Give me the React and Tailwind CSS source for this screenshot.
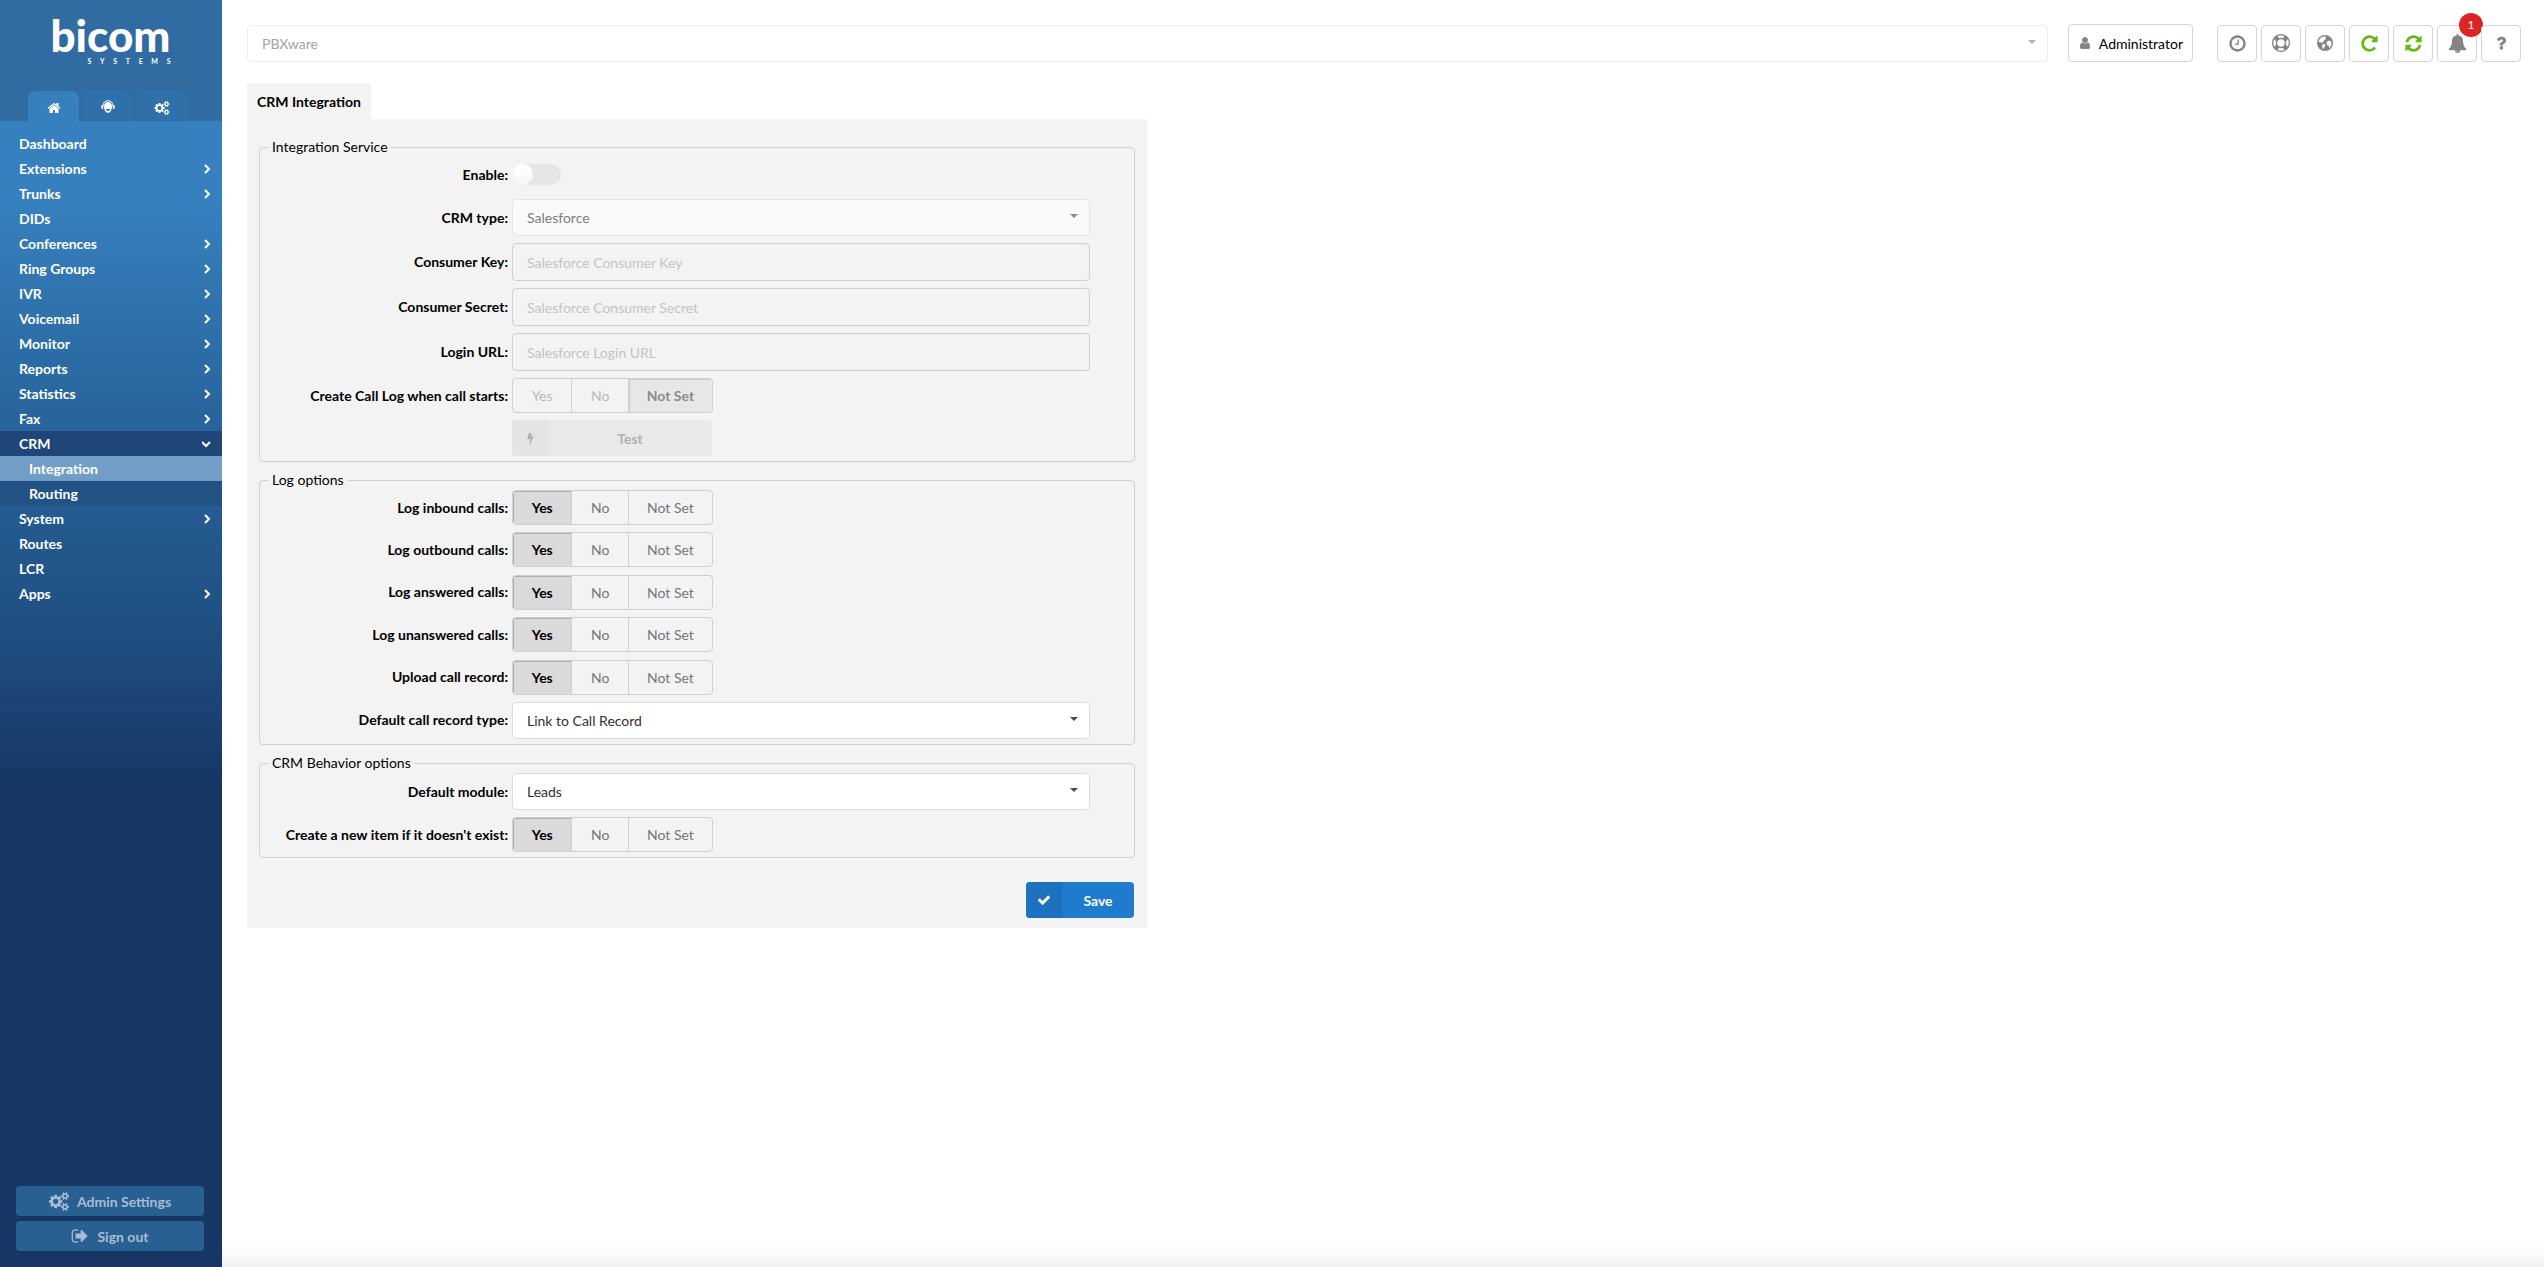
import { useState } from 'react';

/* ---------- icons ---------- */

const ICONS = {
  home: 'M1472 992v480q0 26-19 45t-45 19h-384v-384h-256v384h-384q-26 0-45-19t-19-45v-480q0-1 .5-3t.5-3l575-474 575 474q1 2 1 6zm223-69l-62 74q-8 9-21 11h-3q-13 0-21-7l-692-577-692 577q-12 8-24 7-13-2-21-11l-62-74q-8-10-7-23.5t11-21.5l719-599q32-26 76-26t76 26l244 204v-195q0-14 9-23t23-9h192q14 0 23 9t9 23v408l219 182q10 8 11 21.5t-7 23.5z',
  check: 'M1671 566q0 40-28 68l-724 724-136 136q-28 28-68 28t-68-28l-136-136-362-362q-28-28-28-68t28-68l136-136q28-28 68-28t68 28l294 295 656-657q28-28 68-28t68 28l136 136q28 28 28 68z',
  repeat: 'M1664 256v448q0 26-19 45t-45 19h-448q-42 0-59-40-17-39 14-69l138-138q-148-137-349-137-104 0-198.5 40.5t-163.5 109.5-109.5 163.5-40.5 198.5 40.5 198.5 109.5 163.5 163.5 109.5 198.5 40.5q119 0 225-52t179-147q7-10 23-12 15 0 25 9l137 138q9 8 9.5 20.5t-7.5 22.5q-109 132-264 204.5t-327 72.5q-156 0-298-61t-245-164-164-245-61-298 61-298 164-245 245-164 298-61q147 0 284.5 55.5t244.5 156.5l130-129q29-31 70-14 39 17 39 59z',
  refresh: 'M1639 1056q0 5-1 7-64 268-268 434.5t-478 166.5q-146 0-282.5-55t-243.5-157l-129 129q-19 19-45 19t-45-19-19-45v-448q0-26 19-45t45-19h448q26 0 45 19t19 45-19 45l-137 137q71 66 161 102t187 36q134 0 250-65t186-179q11-17 53-117 8-23 30-23h192q13 0 22.5 9.5t9.5 22.5zm25-800v448q0 26-19 45t-45 19h-448q-26 0-45-19t-19-45 19-45l138-138q-148-137-349-137-134 0-250 65t-186 179q-11 17-53 117-8 23-30 23h-199q-13 0-22.5-9.5t-9.5-22.5v-7q65-268 270-434.5t480-166.5q146 0 284 55.5t245 156.5l130-129q19-19 45-19t45 19 19 45z',
  clock: 'M1024 544v448q0 14-9 23t-23 9h-320q-14 0-23-9t-9-23v-64q0-14 9-23t23-9h224v-352q0-14 9-23t23-9h64q14 0 23 9t9 23zm416 352q0-148-73-273t-198-198-273-73-273 73-198 198-73 273 73 273 198 198 273 73 273-73 198-198 73-273zm224 0q0 209-103 385.5t-279.5 279.5-385.5 103-385.5-103-279.5-279.5-103-385.5 103-385.5 279.5-279.5 385.5-103 385.5 103 279.5 279.5 103 385.5z',
  question: 'M1088 1256v240q0 16-12 28t-28 12h-240q-16 0-28-12t-12-28v-240q0-16 12-28t28-12h240q16 0 28 12t12 28zm316-600q0 54-15.5 101t-35 76.5-55 59.5-57.5 43.5-61 35.5q-41 23-68.5 65t-27.5 67q0 17-12 32.5t-28 15.5h-240q-15 0-25.5-18.5t-10.5-37.5v-45q0-83 65-156.5t143-108.5q59-27 84-56t25-76q0-42-46.5-74t-107.5-32q-65 0-108 29-35 25-107 115-13 16-31 16-12 0-25-8l-164-125q-13-10-15.5-25t5.5-28q160-266 464-266 80 0 161 31t146 83 106 127.5 41 158.5z',
  ring: 'M896 0q182 0 348 71t286 191 191 286 71 348-71 348-191 286-286 191-348 71-348-71-286-191-191-286-71-348 71-348 191-286 286-191 348-71zm0 128q-190 0-361 90l194 194q82-28 167-28t167 28l194-194q-171-90-361-90zm-678 1129l194-194q-28-82-28-167t28-167l-194-194q-90 171-90 361t90 361zm678 407q190 0 361-90l-194-194q-82 28-167 28t-167-28l-194 194q171 90 361 90zm0-384q159 0 271.5-112.5t112.5-271.5-112.5-271.5-271.5-112.5-271.5 112.5-112.5 271.5 112.5 271.5 271.5 112.5zm484-217l194 194q90-171 90-361t-90-361l-194 194q28 82 28 167t-28 167z',
  bell: 'M912 1696q0-16-16-16-59 0-101.5-42.5t-42.5-101.5q0-16-16-16t-16 16q0 73 51.5 124.5t124.5 51.5q16 0 16-16zm816-288q0 52-38 90t-90 38h-448q0 106-75 181t-181 75-181-75-75-181h-448q-52 0-90-38t-38-90q50-42 91-88t85-119.5 74.5-158.5 50-206 19.5-260q0-152 117-282.5t307-158.5q-8-19-8-39 0-40 28-68t68-28 68 28 28 68q0 20-8 39 190 28 307 158.5t117 282.5q0 139 19.5 260t50 206 74.5 158.5 85 119.5 91 88z',
  signOut: 'M704 1440q0 4 1 20t.5 26.5-3 23.5-10 19.5-20.5 6.5h-320q-119 0-203.5-84.5t-84.5-203.5v-704q0-119 84.5-203.5t203.5-84.5h320q13 0 22.5 9.5t9.5 22.5q0 4 1 20t.5 26.5-3 23.5-10 19.5-20.5 6.5h-320q-66 0-113 47t-47 113v704q0 66 47 113t113 47h312l11.5 1 11.5 3 8 5.5 7 9 2 13.5zm928-544q0 26-19 45l-544 544q-19 19-45 19t-45-19-19-45v-288h-448q-26 0-45-19t-19-45v-384q0-26 19-45t45-19h448v-288q0-26 19-45t45-19 45 19l544 544q19 19 19 45z',
  bolt: 'M1333 566q18 20 7 44l-540 1157q-13 25-42 25-4 0-14-2-17-5-25.5-19t-4.5-30l197-808-406 101q-4 1-12 1-18 0-31-11-18-15-13-39l201-825q4-14 16-23t28-9h328q19 0 32 12.5t13 29.5q0 8-5 18l-171 463 396-98q8-2 12-2 19 0 34 15z',
  user: 'M1536 1399q0 109-62.5 187t-150.5 78h-854q-88 0-150.5-78t-62.5-187q0-85 8.5-160.5t31.5-152 58.5-131 94-89 134.5-34.5q131 128 313 128t313-128q76 0 134.5 34.5t94 89 58.5 131 31.5 152 8.5 160.5zm-256-887q0 159-112.5 271.5t-271.5 112.5-271.5-112.5-112.5-271.5 112.5-271.5 271.5-112.5 271.5 112.5 112.5 271.5z',
};

const COGS =
  'M832 896q0-106-75-181t-181-75-181 75-75 181 75 181 181 75 181-75 75-181zm768 512q0-52-38-90t-90-38-90 38-38 90q0 53 37.5 90.5t90.5 37.5 90.5-37.5 37.5-90.5zm0-1024q0-52-38-90t-90-38-90 38-38 90q0 53 37.5 90.5t90.5 37.5 90.5-37.5 37.5-90.5zm-384 421v185q0 10-7 19.5t-16 10.5l-155 24q-11 35-32 76 34 48 90 115 7 11 7 20 0 12-7 19-23 30-82.5 89.5t-78.5 59.5q-11 0-21-7l-115-90q-37 19-77 31-11 108-23 155-7 24-30 24h-186q-11 0-20-7.5t-10-17.5l-23-153q-34-10-75-31l-118 89q-7 7-20 7-11 0-21-8-144-133-144-160 0-9 7-19 10-14 41-53t47-61q-23-44-35-82l-152-24q-10-1-17-9.5t-7-19.5v-185q0-10 7-19.5t16-10.5l155-24q11-35 32-76-34-48-90-115-7-11-7-20 0-12 7-20 22-30 82-89t79-59q11 0 21 7l115 90q34-18 77-32 11-108 23-154 7-24 30-24h186q11 0 20 7.5t10 17.5l23 153q34 10 75 31l118-89q8-7 20-7 11 0 21 8 144 133 144 160 0 8-7 19-12 16-42 54t-45 60q23 48 34 82l152 23q10 2 17 10.5t7 19.5zm640 533v140q0 16-149 31-12 27-30 52 51 113 51 138 0 4-4 7-122 71-124 71-8 0-46-47t-52-68q-20 2-30 2t-30-2q-14 21-52 68t-46 47q-2 0-124-71-4-3-4-7 0-25 51-138-18-25-30-52-149-15-149-31v-140q0-16 149-31 13-29 30-52-51-113-51-138 0-4 4-7 4-2 35-20t59-34 30-16q8 0 46 46.5t52 67.5q20-2 30-2t30 2q51-71 92-112l6-2q4 0 124 70 4 3 4 7 0 25-51 138 17 23 30 52 149 15 149 31zm0-1024v140q0 16-149 31-12 27-30 52 51 113 51 138 0 4-4 7-122 71-124 71-8 0-46-47t-52-68q-20 2-30 2t-30-2q-14 21-52 68t-46 47q-2 0-124-71-4-3-4-7 0-25 51-138-18-25-30-52-149-15-149-31v-140q0-16 149-31 13-29 30-52-51-113-51-138 0-4 4-7 4-2 35-20t59-34 30-16q8 0 46 46.5t52 67.5q20-2 30-2t30 2q51-71 92-112l6-2q4 0 124 70 4 3 4 7 0 25-51 138 17 23 30 52 149 15 149 31z';

function Icon({ name, className }) {
  return (
    <svg viewBox="0 0 1792 1792" fill="currentColor" aria-hidden="true" className={className}>
      <path d={ICONS[name]} />
    </svg>
  );
}

function CogsIcon({ className }) {
  return (
    <svg viewBox="-64 0 1920 1792" fill="currentColor" aria-hidden="true" className={className}>
      <path d={COGS} />
    </svg>
  );
}

function HeadsetIcon({ className }) {
  return (
    <svg viewBox="0 0 14 14" fill="currentColor" aria-hidden="true" className={className}>
      <path d="M2 6C2 2.6 4.2.7 7 .7S12 2.6 12 6" fill="none" stroke="currentColor" strokeWidth="1" />
      <rect x="0.3" y="5" width="2" height="4" rx="1" />
      <rect x="11.7" y="5" width="2" height="4" rx="1" />
      <path
        fillRule="evenodd"
        d="M7 2C9.600 2 11 3.700 11 6.200c0 3.600-1.800 6.600-4 6.600s-4-3-4-6.600C3 3.700 4.400 2 7 2zM4.900 9c.3 1.300 1.200 1.900 2.300 1.900 1.200 0 1.900-.7 2.200-1.900z"
      />
    </svg>
  );
}

function GlobeIcon({ className }) {
  return (
    <svg viewBox="0 0 16 16" aria-hidden="true" className={className}>
      <circle cx="8" cy="8" r="8" fill="currentColor" />
      <path
        fill="#fff"
        d="M8.200 1.300L9 2.200 7.800 2.900 8.700 3.700 8.900 4.500 7.600 4.800 6.900 5.900 5.800 6.900 4.900 7 5.700 8.100 5.300 8.500 3.700 7.300 2.500 6.700 1.400 7.300C1.600 5.200 2.800 3.300 4.600 2.200zM10.200 6.500L11.900 5.600 13.400 6.100 14.600 7.700C14.600 9.800 13.600 11.700 12.100 12.900L11.600 10.600 10.300 10.200 9.300 8.400zM5.900 8.800L7.400 9.300 8.500 10.400 8 11.700 6.900 12.500 6.200 14.400C5.500 13.300 5 12 5.200 10.700z"
      />
    </svg>
  );
}

function Chevron({ open }) {
  return (
    <svg
      viewBox="0 0 10 10"
      fill="none"
      stroke="currentColor"
      strokeWidth="2"
      aria-hidden="true"
      className="size-[10px]"
    >
      <path d={open ? 'M0 3l4 4 4-4' : 'M3 1l4 4-4 4'} />
    </svg>
  );
}

/* ---------- sidebar ---------- */

const MENU = [
  { label: 'Dashboard' },
  { label: 'Extensions', more: true },
  { label: 'Trunks', more: true },
  { label: 'DIDs' },
  { label: 'Conferences', more: true },
  { label: 'Ring Groups', more: true },
  { label: 'IVR', more: true },
  { label: 'Voicemail', more: true },
  { label: 'Monitor', more: true },
  { label: 'Reports', more: true },
  { label: 'Statistics', more: true },
  { label: 'Fax', more: true },
  { label: 'CRM', more: true, children: ['Integration', 'Routing'] },
  { label: 'System', more: true },
  { label: 'Routes' },
  { label: 'LCR' },
  { label: 'Apps', more: true },
];

function Logo() {
  return (
    <div className="flex w-[119px] flex-col items-end text-white">
      <span className="text-[44px] leading-[44px] font-black">bicom</span>
      <span className="flex w-[83px] justify-between text-[7px] leading-2">
        {'SYSTEMS'.split('').map((c, i) => (
          <span key={i}>{c}</span>
        ))}
      </span>
    </div>
  );
}

function Sidebar() {
  return (
    <aside className="flex w-[222px] shrink-0 flex-col bg-[#163764] text-[14px] font-bold text-white">
      <header className="bg-[#306ca1]">
        <div className="flex h-[91px] items-start justify-center pt-[13px]">
          <Logo />
        </div>
        <div className="flex gap-[3px] pl-7">
          <button aria-label="Home" className="flex h-[30px] w-[51px] items-center justify-center rounded-t-lg bg-[#3680be] pt-1">
            <Icon name="home" className="size-[14px]" />
          </button>
          <button aria-label="Operators" className="flex h-[30px] w-[51px] items-center justify-center rounded-t-lg bg-[#2f70aa] pt-px">
            <HeadsetIcon className="size-[14px]" />
          </button>
          <button aria-label="Settings" className="flex h-[30px] w-[51px] items-center justify-center rounded-t-lg bg-[#2f70aa] pt-1">
            <CogsIcon className="h-[14px] w-4" />
          </button>
        </div>
      </header>
      <nav className="flex-1 bg-[linear-gradient(to_bottom,#3680be_0px,#3680be_80px,#28649c_300px,#204f82_510px,#163764_660px)] pt-[10px]">
        <ul>
          {MENU.map((item) => (
            <li key={item.label}>
              <a
                href="#"
                className={`flex h-[25px] items-center justify-between pr-[10px] pl-[19px] ${
                  item.children ? 'bg-[#1f4679]' : ''
                }`}
              >
                {item.label}
                {item.more && <Chevron open={!!item.children} />}
              </a>
              {item.children && (
                <ul>
                  {item.children.map((child, i) => (
                    <li key={child}>
                      <a
                        href="#"
                        className={`flex h-[25px] items-center pl-[29px] ${i === 0 ? 'bg-[#719dc6]' : 'bg-[#225286]'}`}
                      >
                        {child}
                      </a>
                    </li>
                  ))}
                </ul>
              )}
            </li>
          ))}
        </ul>
      </nav>
      <div className="flex flex-col gap-[5px] pr-[18px] pb-4 pl-4 text-[#a8bcd6]">
        <button className="flex h-[30px] items-center justify-center gap-2 rounded bg-[#276091]">
          <CogsIcon className="h-[19px] w-5" />
          Admin Settings
        </button>
        <button className="flex h-[30px] items-center justify-center gap-2 rounded bg-[#276091]">
          <Icon name="signOut" className="size-[18px]" />
          Sign out
        </button>
      </div>
    </aside>
  );
}

/* ---------- top bar ---------- */

function IconButton({ label, className = '', children }) {
  return (
    <button
      aria-label={label}
      className={`relative flex h-[37px] w-10 items-center justify-center rounded border border-[#d4d4d4] bg-white ${className}`}
    >
      {children}
    </button>
  );
}

function TopBar() {
  return (
    <header className="flex h-[38px] items-center">
      <Select label="Server" options={['PBXware']} disabled tone="faint" className="flex-1" />
      <button className="ml-5 flex h-[38px] items-center gap-[7px] rounded border border-[#d4d4d4] bg-white px-[9px] text-[14px]">
        <Icon name="user" className="size-[14px] text-[#848484]" />
        Administrator
      </button>
      <div className="ml-6 flex shrink-0 gap-1 text-[#848484]">
        <IconButton label="Time">
          <Icon name="clock" className="size-[19px]" />
        </IconButton>
        <IconButton label="Support">
          <Icon name="ring" className="size-[18px]" />
        </IconButton>
        <IconButton label="Language">
          <GlobeIcon className="size-4" />
        </IconButton>
        <IconButton label="Reload" className="text-[#62b916]">
          <Icon name="repeat" className="size-[19px]" />
        </IconButton>
        <IconButton label="Restart" className="text-[#62b916]">
          <Icon name="refresh" className="size-[19px]" />
        </IconButton>
        <IconButton label="Notifications">
          <Icon name="bell" className="size-[19px]" />
          <span className="absolute -top-[13px] -right-[7px] flex size-6 items-center justify-center rounded-full bg-[#db2423] text-[12px] text-white">
            1
          </span>
        </IconButton>
        <IconButton label="Help">
          <Icon name="question" className="size-[18px]" />
        </IconButton>
      </div>
    </header>
  );
}

/* ---------- form controls ---------- */

const TONES = {
  normal: 'border-[#dcdcdc] bg-white text-[#303030]',
  muted: 'border-[#e4e4e4] bg-[#fafafa] text-[#7d7d7d]',
  faint: 'border-[#eeeeee] bg-white text-[#a3a3a3]',
};

const CARETS = {
  normal: 'text-[#4a4a4a]',
  muted: 'text-[#8c8c8c]',
  faint: 'text-[#b5b5b5]',
};

function Select({ id, label, options, disabled, tone = 'normal', className = '' }) {
  return (
    <div className={`relative ${className}`}>
      <select
        id={id}
        aria-label={label}
        disabled={disabled}
        className={`block h-[37px] w-full appearance-none rounded border px-[14px] text-[14px] opacity-100 ${TONES[tone]}`}
      >
        {options.map((o) => (
          <option key={o}>{o}</option>
        ))}
      </select>
      <svg
        viewBox="0 0 8 4"
        aria-hidden="true"
        className={`pointer-events-none absolute top-[15px] right-3 h-1 w-2 ${CARETS[tone]}`}
      >
        <path d="M0 0h8L4 4z" fill="currentColor" />
      </svg>
    </div>
  );
}

function Row({ label, htmlFor, children }) {
  return (
    <div className="flex items-center gap-1">
      <div className="w-[248px] shrink-0 text-right text-[14px] leading-[18px] font-bold">
        {htmlFor ? <label htmlFor={htmlFor}>{label}:</label> : label && <span>{label}:</span>}
      </div>
      <div className="mr-[44px] flex-1">{children}</div>
    </div>
  );
}

function SelectRow({ id, label, options, disabled }) {
  return (
    <Row label={label} htmlFor={id}>
      <Select id={id} options={options} disabled={disabled} tone={disabled ? 'muted' : 'normal'} />
    </Row>
  );
}

function TextRow({ id, label, placeholder }) {
  return (
    <Row label={label} htmlFor={id}>
      <input
        id={id}
        type="text"
        disabled
        placeholder={placeholder}
        className="block h-[38px] w-full rounded border border-[#d0d0d0] px-[14px] text-[14px] placeholder:text-[#c4c4c4]"
      />
    </Row>
  );
}

const CHOICES = [
  { value: 'Yes', width: 'w-[60px]' },
  { value: 'No', width: 'w-[57px]' },
  { value: 'Not Set', width: 'w-[84px]' },
];

function ChoiceRow({ id, label, initial = 'Yes', disabled }) {
  const [value, setValue] = useState(initial);
  const active = disabled
    ? 'bg-[#e7e7e7] font-bold text-[#8a8a8a] shadow-[inset_1px_1px_0_#cdcdcd]'
    : 'bg-[#dadada] font-bold text-black shadow-[inset_1px_1px_0_#b0b0b0]';
  const idle = disabled ? 'text-[#b8b8b8]' : 'text-[#757575]';

  return (
    <Row label={label}>
      <div
        role="radiogroup"
        aria-label={label}
        className="relative flex h-[35px] w-[201px] overflow-hidden rounded border border-[#cfcfcf] text-[14px]"
      >
        {CHOICES.map((c) => (
          <label
            key={c.value}
            className={`flex items-center justify-center border-r border-[#cfcfcf] last:border-r-0 ${c.width} ${
              value === c.value ? active : idle
            }`}
          >
            <input
              type="radio"
              name={id}
              value={c.value}
              checked={value === c.value}
              onChange={() => setValue(c.value)}
              disabled={disabled}
              className="sr-only"
            />
            {c.value}
          </label>
        ))}
      </div>
    </Row>
  );
}

function Section({ title, className = '', children }) {
  return (
    <fieldset className={`rounded border border-[#d0d0d0] pb-[5px] ${className}`}>
      <legend className="ml-[9px] px-[3px] text-[14px] leading-5">{title}</legend>
      {children}
    </fieldset>
  );
}

/* ---------- page ---------- */

function IntegrationForm() {
  return (
    <form
      className="w-[900px] max-w-full bg-[#f3f3f3] px-3 pt-[18px] pb-[10px] text-black"
      onSubmit={(e) => e.preventDefault()}
    >
      <Section title="Integration Service">
        <div className="flex flex-col gap-[7px]">
          <Row label="Enable" htmlFor="enable">
            <div className="flex h-[35px] items-center">
              <input
                id="enable"
                type="checkbox"
                role="switch"
                className="h-[21px] w-[49px] appearance-none rounded-full bg-[#e6e6e6] before:block before:size-[21px] before:rounded-full before:bg-linear-to-b before:from-white before:to-[#f6f6f6]"
              />
            </div>
          </Row>
          <SelectRow id="crm-type" label="CRM type" options={['Salesforce']} disabled />
          <TextRow id="consumer-key" label="Consumer Key" placeholder="Salesforce Consumer Key" />
          <TextRow id="consumer-secret" label="Consumer Secret" placeholder="Salesforce Consumer Secret" />
          <TextRow id="login-url" label="Login URL" placeholder="Salesforce Login URL" />
          <ChoiceRow id="call-log" label="Create Call Log when call starts" initial="Not Set" disabled />
          <Row>
            <button
              type="button"
              disabled
              className="flex h-9 w-[200px] overflow-hidden rounded bg-[#e8eae9] text-[14px] font-bold text-[#b0b0b0]"
            >
              <span className="flex h-full w-9 items-center justify-center bg-[#e3e4e6]">
                <Icon name="bolt" className="size-[13px]" />
              </span>
              <span className="flex h-full flex-1 items-center justify-center">Test</span>
            </button>
          </Row>
        </div>
      </Section>

      <Section title="Log options" className="mt-2">
        <div className="flex min-h-[249px] flex-col justify-between">
          <ChoiceRow id="log-inbound" label="Log inbound calls" />
          <ChoiceRow id="log-outbound" label="Log outbound calls" />
          <ChoiceRow id="log-answered" label="Log answered calls" />
          <ChoiceRow id="log-unanswered" label="Log unanswered calls" />
          <ChoiceRow id="upload-record" label="Upload call record" />
          <SelectRow id="record-type" label="Default call record type" options={['Link to Call Record']} />
        </div>
      </Section>

      <Section title="CRM Behavior options" className="mt-2">
        <div className="flex flex-col gap-[7px]">
          <SelectRow id="module" label="Default module" options={['Leads']} />
          <ChoiceRow id="create-item" label="Create a new item if it doesn't exist" />
        </div>
      </Section>

      <div className="mt-6 flex justify-end pr-px">
        <button
          type="submit"
          className="flex h-9 w-[108px] overflow-hidden rounded bg-[#1e7bcd] text-[14px] font-bold text-white"
        >
          <span className="flex h-full w-9 items-center justify-center bg-[#1d72bf]">
            <Icon name="check" className="size-[14px]" />
          </span>
          <span className="flex h-full flex-1 items-center justify-center">Save</span>
        </button>
      </div>
    </form>
  );
}

export default function App() {
  return (
    <div className="flex min-h-screen bg-white font-[Lato,'Open_Sans',sans-serif] text-black">
      <Sidebar />
      <main className="flex-1 bg-[linear-gradient(to_top,#f1f1f1_0px,#fafafa_12px,#ffffff_30px)] pt-6 pr-[23px] pl-[25px]">
        <TopBar />
        <h1 className="mt-[21px] flex h-9 w-[124px] items-center justify-center bg-[#f3f3f3] text-[14px] font-bold">
          CRM Integration
        </h1>
        <IntegrationForm />
      </main>
    </div>
  );
}
